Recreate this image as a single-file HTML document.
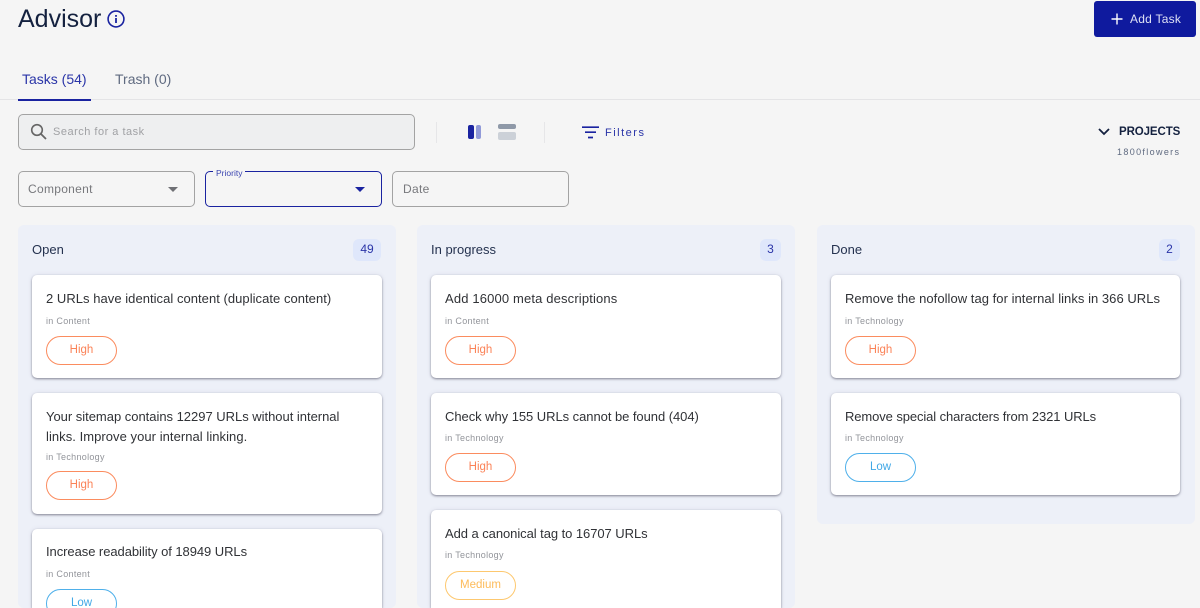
<!DOCTYPE html>
<html><head><meta charset="utf-8"><style>
*{box-sizing:border-box}
html,body{margin:0;padding:0;width:1200px;height:608px;overflow:hidden}
body{background:#f5f5f5;font-family:"Liberation Sans",sans-serif}
#r{position:relative;width:1200px;height:608px;overflow:hidden;background:#f5f5f5}
.a,.col,.card,.t,.s,.p{position:absolute;white-space:nowrap}
.col{background:#edf0f8;border-radius:6px;width:378px;top:225px}
.card{background:#fff;border-radius:5px;width:350px;box-shadow:0 1px 2px rgba(50,50,70,.55),0 0 6px rgba(60,70,120,.08)}
.t{left:14px;font-size:13px;line-height:20px;color:#303236}
.s{left:14px;font-size:9px;line-height:12px;color:#92949a;letter-spacing:.3px}
.p{left:14px;width:71px;height:29px;border-radius:15px;border:1px solid;text-align:center;font-size:11.5px;line-height:26px;background:#fff}
.h{border-color:#fb8c5f;color:#fb8358}
.l{border-color:#4fb0ea;color:#42a8e6}
.m{border-color:#fdc86f;color:#fdbb5a}
.ch{position:absolute;left:14px;top:17px;font-size:13px;line-height:16px;color:#25324f}
.b{position:absolute;top:14px;width:21px;height:22px;background:#dfe7fb;border-radius:6px;text-align:center;font-size:12px;line-height:21px;color:#2b35a8}
.box{position:absolute;border:1px solid #a3a3a3;border-radius:5px}
</style></head><body><div id="r">
<div class="a" style="left:18px;top:4px;font-size:25px;line-height:30px;color:#14213f">Advisor</div>
<svg class="a" style="left:106px;top:9px" width="20" height="20" viewBox="0 0 20 20" fill="none"><circle cx="10" cy="10" r="7.9" stroke="#1a23a0" stroke-width="1.6"/><rect x="9.1" y="9" width="1.8" height="5" fill="#1a23a0"/><rect x="9.1" y="6" width="1.8" height="1.8" fill="#1a23a0"/></svg>
<div class="a" style="left:1094px;top:1px;width:102px;height:36px;background:#0f1a9e;border-radius:3px"></div>
<svg class="a" style="left:1110px;top:12px" width="14" height="14" viewBox="0 0 14 14"><path d="M7 1.5V12.5M1.5 7H12.5" stroke="#fff" stroke-width="1.4"/></svg>
<div class="a" style="left:1130px;top:11px;font-size:12px;line-height:16px;color:#dfe2f5;letter-spacing:.25px">Add Task</div>
<div class="a" style="left:22px;top:70px;font-size:14px;line-height:18px;color:#2a35a8">Tasks (54)</div>
<div class="a" style="left:115px;top:70px;font-size:14px;line-height:18px;color:#5f6a80">Trash (0)</div>
<div class="a" style="left:0;top:99px;width:1200px;height:1px;background:#e4e4e6"></div>
<div class="a" style="left:18px;top:99px;width:73px;height:2px;background:#1a23a0"></div>
<div class="box" style="left:18px;top:114px;width:397px;height:36px;background:#eeeff0"></div>
<svg class="a" style="left:30px;top:123px" width="18" height="18" viewBox="0 0 18 18" fill="none"><circle cx="7" cy="7" r="5.3" stroke="#666" stroke-width="1.6"/><path d="M11 11L16 16" stroke="#666" stroke-width="1.8"/></svg>
<div class="a" style="left:53px;top:125px;font-size:11px;line-height:15px;color:#a0a1a4;letter-spacing:.5px">Search for a task</div>
<div class="a" style="left:436px;top:122px;width:1px;height:21px;background:#e6e6e8"></div>
<div class="a" style="left:544px;top:122px;width:1px;height:21px;background:#e6e6e8"></div>
<div class="a" style="left:468px;top:125px;width:5.5px;height:14px;background:#1a23a0;border-radius:2px"></div>
<div class="a" style="left:475.5px;top:125px;width:5.5px;height:14px;background:#919ad8;border-radius:2px"></div>
<div class="a" style="left:497.5px;top:124px;width:18.5px;height:5px;background:#8f99a8;border-radius:2px"></div>
<div class="a" style="left:497.5px;top:131.5px;width:18.5px;height:8.5px;background:#ccd1d8;border-radius:2px"></div>
<svg class="a" style="left:582px;top:126px" width="17" height="13" viewBox="0 0 17 13"><path d="M0 1.2H17M3 6.2H14M6 11.5H11" stroke="#1a23a0" stroke-width="1.7"/></svg>
<div class="a" style="left:605px;top:125.5px;font-size:11px;line-height:15px;color:#2a35a8;letter-spacing:1.5px">Filters</div>
<svg class="a" style="left:1097px;top:127px" width="14" height="10" viewBox="0 0 14 10" fill="none"><path d="M2 2L7 7L12 2" stroke="#14213f" stroke-width="1.8"/></svg>
<div class="a" style="left:1119px;top:125px;font-size:11.5px;line-height:15px;color:#14213f;font-weight:bold;letter-spacing:-.1px">PROJECTS</div>
<div class="a" style="left:1117px;top:146px;font-size:9px;line-height:12px;color:#5f6a80;letter-spacing:1.35px">1800flowers</div>
<div class="box" style="left:18px;top:171px;width:177px;height:36px"></div>
<div class="a" style="left:28px;top:182px;font-size:12px;line-height:15px;color:#77787c;letter-spacing:.3px">Component</div>
<div class="a" style="left:168px;top:187px;border:5px solid transparent;border-top:5px solid #6f7075;border-bottom:0"></div>
<div class="box" style="left:205px;top:171px;width:177px;height:36px;border-color:#1a23a0"></div>
<div class="a" style="left:213px;top:167.5px;padding:0 3px;background:#f5f5f5;font-size:8.5px;line-height:11px;color:#3a44b0">Priority</div>
<div class="a" style="left:355px;top:187px;border:5px solid transparent;border-top:5px solid #1a23a0;border-bottom:0"></div>
<div class="box" style="left:392px;top:171px;width:177px;height:36px"></div>
<div class="a" style="left:403px;top:182px;font-size:12px;line-height:15px;color:#77787c;letter-spacing:.3px">Date</div>

<div class="col" style="left:18px;height:383px"><div class="ch">Open</div><div class="b" style="left:335px;width:28px">49</div></div>
<div class="col" style="left:417px;height:383px"><div class="ch">In progress</div><div class="b" style="left:343px">3</div></div>
<div class="col" style="left:817px;height:299px"><div class="ch">Done</div><div class="b" style="left:342px">2</div></div>

<div class="card" style="left:32px;top:275px;height:103px"><div class="t" style="top:14px;letter-spacing:.04px">2 URLs have identical content (duplicate content)</div><div class="s" style="top:40px">in Content</div><div class="p h" style="top:61px">High</div></div>
<div class="card" style="left:32px;top:393px;height:121px"><div class="t" style="top:14px;letter-spacing:-.02px">Your sitemap contains 12297 URLs without internal</div><div class="t" style="top:34px;letter-spacing:.05px">links. Improve your internal linking.</div><div class="s" style="top:58px">in Technology</div><div class="p h" style="top:78px">High</div></div>
<div class="card" style="left:32px;top:529px;height:79px;overflow:hidden;border-radius:5px 5px 0 0"><div class="t" style="top:13px;letter-spacing:-.06px">Increase readability of 18949 URLs</div><div class="s" style="top:39px">in Content</div><div class="p l" style="top:60px">Low</div></div>

<div class="card" style="left:431px;top:275px;height:103px"><div class="t" style="top:14px;letter-spacing:.15px">Add 16000 meta descriptions</div><div class="s" style="top:40px">in Content</div><div class="p h" style="top:61px">High</div></div>
<div class="card" style="left:431px;top:393px;height:102px"><div class="t" style="top:14px;letter-spacing:-.05px">Check why 155 URLs cannot be found (404)</div><div class="s" style="top:39px">in Technology</div><div class="p h" style="top:60px">High</div></div>
<div class="card" style="left:431px;top:510px;height:98px;overflow:hidden;border-radius:5px 5px 0 0"><div class="t" style="top:14px;letter-spacing:-.06px">Add a canonical tag to 16707 URLs</div><div class="s" style="top:39px">in Technology</div><div class="p m" style="top:61px">Medium</div></div>

<div class="card" style="left:831px;top:275px;width:349px;height:103px"><div class="t" style="top:14px;letter-spacing:.04px">Remove the nofollow tag for internal links in 366 URLs</div><div class="s" style="top:40px">in Technology</div><div class="p h" style="top:61px">High</div></div>
<div class="card" style="left:831px;top:393px;width:349px;height:102px"><div class="t" style="top:14px;letter-spacing:-.1px">Remove special characters from 2321 URLs</div><div class="s" style="top:39px">in Technology</div><div class="p l" style="top:60px">Low</div></div>
</div></body></html>
